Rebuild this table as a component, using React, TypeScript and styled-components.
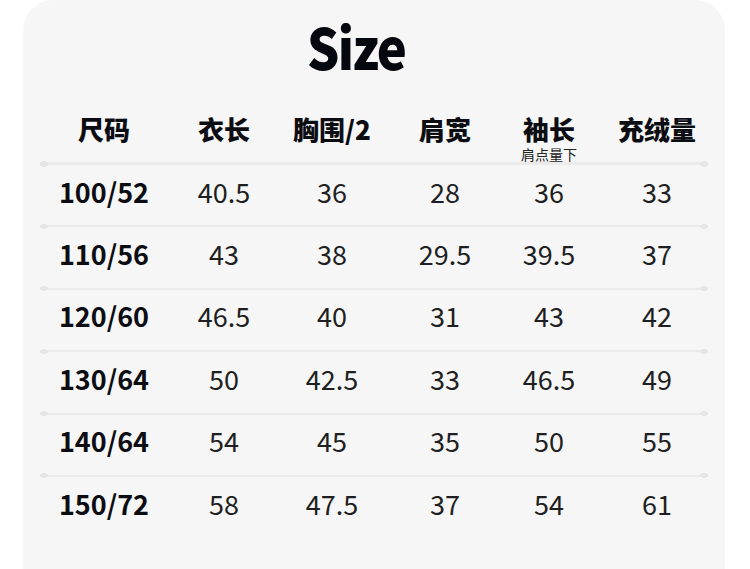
import styled, { createGlobalStyle } from "styled-components";

const GlobalStyle = createGlobalStyle`
  html, body {
    margin: 0;
    padding: 0;
    background: #ffffff;
  }
  body {
    font-family: "Noto Sans CJK SC", "Noto Sans", sans-serif;
  }
`;

interface SizeRow {
  size: string;
  values: string[];
}

const columns = ["124px", "116px", "100px", "126px", "82px", "134px"];

const headers = [
  { label: "尺码" },
  { label: "衣长" },
  { label: "胸围/2" },
  { label: "肩宽" },
  { label: "袖长", note: "肩点量下" },
  { label: "充绒量" },
];

const rows: SizeRow[] = [
  { size: "100/52", values: ["40.5", "36", "28", "36", "33"] },
  { size: "110/56", values: ["43", "38", "29.5", "39.5", "37"] },
  { size: "120/60", values: ["46.5", "40", "31", "43", "42"] },
  { size: "130/64", values: ["50", "42.5", "33", "46.5", "49"] },
  { size: "140/64", values: ["54", "45", "35", "50", "55"] },
  { size: "150/72", values: ["58", "47.5", "37", "54", "61"] },
];

const App: React.FC = () => {
  return (
    <>
      <GlobalStyle />
      <Page>
        <Card>
          <Title>
            <span>Size</span>
          </Title>
          <Table>
            <HeaderRow>
              {headers.map((h) => (
                <HeaderCell key={h.label}>
                  <span className="label">{h.label}</span>
                  {h.note && <span className="note">{h.note}</span>}
                </HeaderCell>
              ))}
            </HeaderRow>
            {rows.map((row) => (
              <DataRow key={row.size}>
                <Cell bold>{row.size}</Cell>
                {row.values.map((v, i) => (
                  <Cell key={i}>{v}</Cell>
                ))}
              </DataRow>
            ))}
          </Table>
        </Card>
      </Page>
    </>
  );
};

const Page = styled.div`
  padding: 0 25px 0 23px;
  width: 750px;
  height: 569px;
  box-sizing: border-box;
  overflow: hidden;
`;

const Card = styled.div`
  background: #f6f6f6;
  border-radius: 30px 30px 0 0;
  min-height: 569px;
  padding: 14px 0 0 19px;
  box-sizing: border-box;
`;

const Title = styled.h1`
  margin: 0;
  padding-right: 54px;
  display: flex;
  justify-content: center;
  height: 62px;
  align-items: center;
  font-size: 57px;
  line-height: 62px;
  font-weight: 900;
  color: #05080f;

  span {
    display: inline-block;
    letter-spacing: -2px;
    transform: scaleX(0.89);
  }
`;

const Table = styled.div`
  margin-top: 37px;
  display: flex;
  flex-direction: column;
`;

const RowBase = styled.div`
  position: relative;
  display: grid;
  grid-template-columns: ${columns.join(" ")};
  align-items: center;

  &::before {
    content: "";
    position: absolute;
    left: 6px;
    width: 652px;
    top: 0;
    height: 2px;
    background: #ebebeb;
  }

  &::after {
    content: "";
    position: absolute;
    left: -2px;
    width: 668px;
    top: -1.5px;
    height: 5px;
    background:
      radial-gradient(ellipse 4px 2.5px at 4px 2.5px, #e6e6e6 98%, transparent 100%),
      radial-gradient(ellipse 4px 2.5px at calc(100% - 4px) 2.5px, #e6e6e6 98%, transparent 100%);
  }
`;

const HeaderRow = styled(RowBase)`
  height: 50px;
  padding-top: 2px;
  box-sizing: border-box;
  align-items: start;

  &::before,
  &::after {
    top: auto;
    bottom: -1px;
  }
  &::after {
    bottom: -2.5px;
  }
`;

const HeaderCell = styled.div`
  display: flex;
  flex-direction: column;
  align-items: center;
  color: #0b0d12;

  .label {
    font-size: 26px;
    line-height: 28px;
    font-weight: 900;
  }

  .note {
    margin-top: 4px;
    font-size: 14px;
    line-height: 14px;
    font-weight: 400;
    color: #222;
  }
`;

const DataRow = styled(RowBase)`
  height: 62.4px;
  padding-bottom: 5px;
  box-sizing: border-box;

  &:first-of-type::before,
  &:first-of-type::after {
    display: none;
  }
`;

const Cell = styled.div<{ bold?: boolean }>`
  text-align: center;
  font-size: 27px;
  line-height: 32px;
  font-weight: ${({ bold }) => (bold ? 700 : 400)};
  color: ${({ bold }) => (bold ? "#0b0d12" : "#1e1f22")};
`;

export default App;
